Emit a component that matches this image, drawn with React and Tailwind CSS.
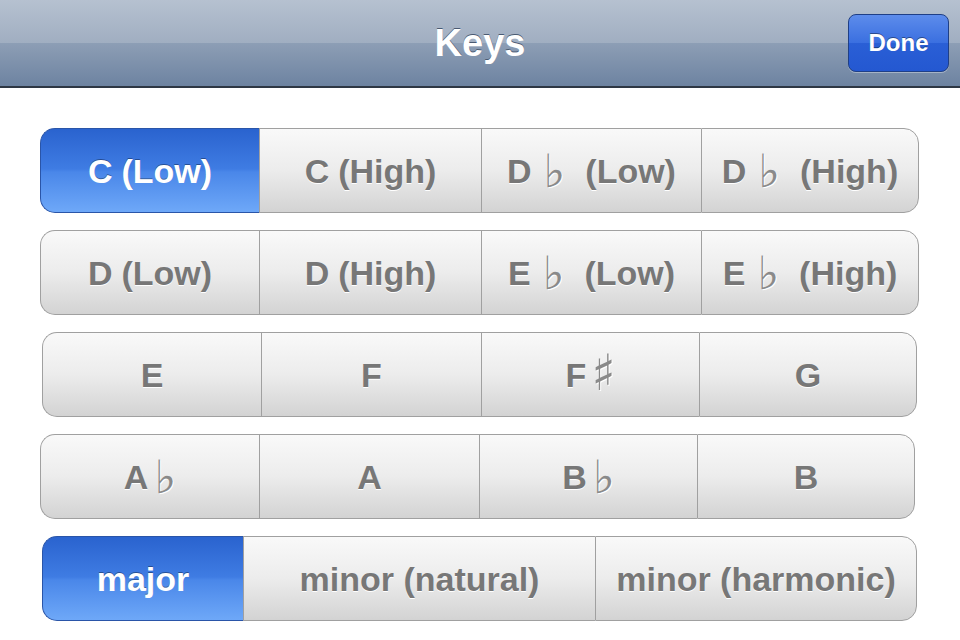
const rows = [
  {
    pad: "ml-[40px]",
    items: [
      { label: "C", rest: "(Low)", w: "w-[219px]", on: true },
      { label: "C", rest: "(High)", w: "w-[222px]" },
      { label: "D", flat: true, rest: "(Low)", w: "w-[220px]" },
      { label: "D", flat: true, rest: "(High)", w: "w-[218px]" }
    ]
  },
  {
    pad: "ml-[40px]",
    items: [
      { label: "D", rest: "(Low)", w: "w-[219px]" },
      { label: "D", rest: "(High)", w: "w-[222px]" },
      { label: "E", flat: true, rest: "(Low)", w: "w-[220px]" },
      { label: "E", flat: true, rest: "(High)", w: "w-[218px]" }
    ]
  },
  {
    pad: "ml-[42px]",
    items: [
      { label: "E", w: "w-[219px]" },
      { label: "F", w: "w-[220px]" },
      { label: "F", sharp: true, w: "w-[218px]" },
      { label: "G", w: "w-[218px]" }
    ]
  },
  {
    pad: "ml-[40px]",
    items: [
      { label: "A", flat: true, tight: true, w: "w-[219px]" },
      { label: "A", w: "w-[220px]" },
      { label: "B", flat: true, tight: true, w: "w-[218px]" },
      { label: "B", w: "w-[218px]" }
    ]
  },
  {
    pad: "ml-[42px]",
    items: [
      { label: "major", w: "w-[201px]", on: true },
      { label: "minor (natural)", w: "w-[352px]" },
      { label: "minor (harmonic)", w: "w-[322px]" }
    ]
  }
];

function Segment({ item, first, last }) {
  const shape = first
    ? "rounded-l-[15px] border-l"
    : last
    ? "rounded-r-[15px] border-l border-r"
    : "border-l";
  const face = item.on
    ? "bg-[linear-gradient(180deg,#2a63cf_0%,#3f7ce3_48%,#4a87e9_52%,#6ea8f8_100%)] border-[#2a55a8] text-white [text-shadow:0_-1px_0_rgba(0,0,0,0.35)]"
    : "bg-[linear-gradient(180deg,#f9f9f9_0%,#ececec_50%,#d3d3d3_100%)] border-[#a0a0a0] text-[#777777] [text-shadow:0_1px_0_#ffffff]";
  return (
    <div
      className={`${item.w} ${shape} ${face} h-full flex items-center justify-center border-y`}
    >
      <span className="text-[34px] font-bold leading-none whitespace-nowrap">
        {item.label}
        {item.flat && (
          <span
            className={`${item.tight ? "ml-[6px]" : "ml-[12px]"} relative top-[4px] text-[46px] leading-[0] font-normal font-['DejaVu_Sans',sans-serif] text-[#8a8a8a] [text-shadow:1px_1px_0_#ffffff]`}
          >
            ♭
          </span>
        )}
        {item.sharp && (
          <span className="ml-[5px] relative top-[3px] text-[50px] leading-[0] font-normal font-['DejaVu_Sans',sans-serif] text-[#8a8a8a] [text-shadow:1px_1px_0_#ffffff]">
            ♯
          </span>
        )}
        {item.rest && (
          <span className={item.flat ? "ml-[20px]" : "ml-[9px]"}>{item.rest}</span>
        )}
      </span>
    </div>
  );
}

export default function App() {
  return (
    <div className="w-[960px] h-[640px] bg-white overflow-hidden font-['Liberation_Sans',Arial,sans-serif]">
      {/* nav bar */}
      <div className="h-[88px] border-b-2 border-[#2e3744] bg-[linear-gradient(180deg,#b6c1d0_0%,#a0aec1_50%,#8d9eb5_50%,#6d83a1_100%)] flex items-center justify-center relative">
        <span className="text-[38px] font-bold text-white [text-shadow:0_-1px_0_#4a5a72]">
          Keys
        </span>
        <div className="absolute right-[11px] top-[14px] w-[101px] h-[58px] rounded-[8px] border border-[#1f3f86] bg-[linear-gradient(180deg,#5d8ceb_0%,#3a6fe0_50%,#2a5fd6_50%,#2458d1_100%)] flex items-center justify-center shadow-[0_1px_0_rgba(255,255,255,0.35)]">
          <span className="text-[24px] font-bold text-white [text-shadow:0_-1px_0_rgba(0,0,0,0.4)]">
            Done
          </span>
        </div>
      </div>

      <div className="flex flex-col gap-[17px] mt-[40px]">
        {rows.map((row, r) => (
          <div key={r} className={`${row.pad} flex h-[85px]`}>
            {row.items.map((item, i) => (
              <Segment
                key={i}
                item={item}
                first={i === 0}
                last={i === row.items.length - 1}
              />
            ))}
          </div>
        ))}
      </div>
    </div>
  );
}
